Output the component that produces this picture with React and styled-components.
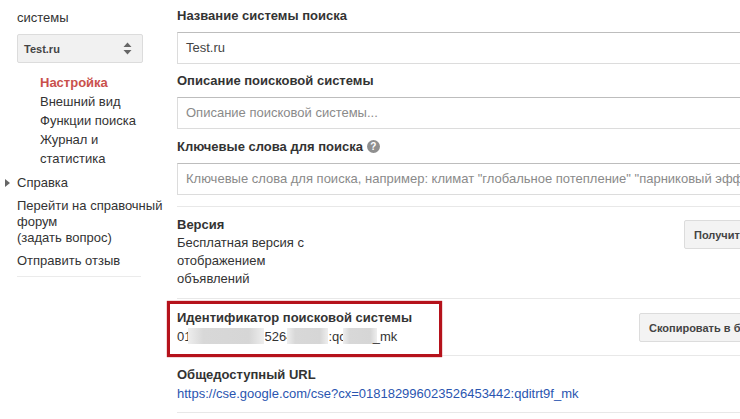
import React from 'react';
import styled, { createGlobalStyle } from 'styled-components';

const GlobalStyle = createGlobalStyle`
  html, body {
    margin: 0;
    padding: 0;
    background: #fff;
    overflow: hidden;
  }
  body {
    font-family: "Liberation Sans", Arial, sans-serif;
    font-size: 13px;
    color: #333;
  }
`;

const Page = styled.div`
  position: relative;
  display: flex;
  width: 740px;
  height: 419px;
  overflow: hidden;
`;

const Sidebar = styled.nav`
  flex: none;
  width: 177px;
  box-sizing: border-box;
  padding: 10px 10px 0 17px;
`;

const SideText = styled.div`
  line-height: 16px;
  margin-top: ${p => p.$top || 0}px;
`;

const Select = styled.div`
  display: flex;
  align-items: center;
  justify-content: space-between;
  width: 126px;
  height: 29px;
  box-sizing: border-box;
  margin-top: 8px;
  padding: 0 10px 0 6px;
  background: #f1f1f1;
  border: 1px solid #dcdcdc;
  border-radius: 2px;
  font-size: 11px;
  font-weight: bold;
  color: #444;
`;

const SubMenu = styled.ul`
  list-style: none;
  width: 105px;
  margin: 10px 0 0;
  padding: 0 0 0 23px;
`;

const SubItem = styled.li`
  line-height: 19px;
  color: ${p => (p.$active ? '#c9504b' : '#333')};
  font-weight: ${p => (p.$active ? 'bold' : 'normal')};
`;

const HelpItem = styled(SideText)`
  position: relative;
`;

const Arrow = styled.i`
  position: absolute;
  left: -12px;
  top: 4px;
  border-left: 5px solid #666;
  border-top: 4px solid transparent;
  border-bottom: 4px solid transparent;
`;

const SideDivider = styled.div`
  width: 124px;
  height: 1px;
  margin-top: 7px;
  background: #ebebeb;
`;

const Main = styled.main`
  flex: none;
  width: 563px;
  padding-top: 8px;
`;

const Label = styled.div`
  font-weight: bold;
  line-height: 15px;
  color: #333;
  display: flex;
  align-items: center;
  gap: 4px;
  margin-top: ${p => p.$top || 0}px;
`;

const Field = styled.div`
  height: 32px;
  width: 600px;
  box-sizing: border-box;
  margin-top: 9px;
  padding-left: 8px;
  border: 1px solid #dcdcdc;
  border-top-color: #bdbdbd;
  font-size: 13px;
  line-height: 30px;
  white-space: nowrap;
  color: ${p => (p.$placeholder ? '#8a8a8a' : '#444')};
`;

const HelpIcon = styled.span`
  display: inline-flex;
  align-items: center;
  justify-content: center;
  width: 13px;
  height: 13px;
  border-radius: 50%;
  background: #8f8f8f;
  color: #fff;
  font-size: 10px;
  font-weight: bold;
`;

const Row = styled.section`
  display: flex;
  align-items: flex-start;
  box-sizing: border-box;
  height: ${p => p.$height}px;
  margin-top: ${p => p.$top || 0}px;
  padding-top: 9px;
  border-top: 1px solid #e8e8e8;
`;

const RowText = styled.div`
  flex: none;
  width: ${p => p.$width}px;
  line-height: ${p => p.$line}px;
`;

const Narrow = styled.div`
  width: 140px;
`;

const RowLabel = styled.div`
  font-weight: bold;
`;

const Button = styled.button`
  flex: none;
  height: 29px;
  width: 200px;
  margin-top: ${p => p.$top || 0}px;
  padding: 0 9px;
  text-align: left;
  white-space: nowrap;
  background: #f3f3f3;
  border: 1px solid #dcdcdc;
  border-radius: 2px;
  font-family: inherit;
  font-size: 11px;
  font-weight: bold;
  color: #444;
`;

const Mask = styled.span`
  display: inline-block;
  width: ${p => p.$width}px;
  height: 16px;
  margin: 0 ${p => p.$after || 0}px 0 ${p => p.$before || -3}px;
  vertical-align: -3px;
  background: linear-gradient(90deg, #eee, #d8d8d8 20%, #d6d6d6 80%, #eee);
`;

const UrlLink = styled.a`
  color: #2a55b0;
  text-decoration: none;
`;

const Highlight = styled.div`
  position: absolute;
  left: 167px;
  top: 301px;
  width: 275px;
  height: 56px;
  box-sizing: border-box;
  border: 3px solid #b5121b;
  box-shadow: 0 0 1px #b5121b;
  pointer-events: none;
`;

export default function App() {
  return (
    <>
      <GlobalStyle />
      <Page>
        <Sidebar>
          <SideText>системы</SideText>
          <Select>
            Test.ru
            <svg width="9" height="13" viewBox="0 0 9 13">
              <path d="M4.5 0.5 L8.5 5 H0.5 Z M4.5 12.5 L8.5 8 H0.5 Z" fill="#666" />
            </svg>
          </Select>
          <SubMenu>
            <SubItem $active>Настройка</SubItem>
            <SubItem>Внешний вид</SubItem>
            <SubItem>Функции поиска</SubItem>
            <SubItem>Журнал и статистика</SubItem>
          </SubMenu>
          <HelpItem $top={7}><Arrow />Справка</HelpItem>
          <SideText $top={7}>Перейти на справочный форум<br />(задать вопрос)</SideText>
          <SideText $top={7}>Отправить отзыв</SideText>
          <SideDivider />
        </Sidebar>
        <Main>
          <Label>Название системы поиска</Label>
          <Field>Test.ru</Field>
          <Label $top={9}>Описание поисковой системы</Label>
          <Field $placeholder>Описание поисковой системы...</Field>
          <Label $top={10}>
            Ключевые слова для поиска <HelpIcon>?</HelpIcon>
          </Label>
          <Field $placeholder>
            Ключевые слова для поиска, например: климат "глобальное потепление" "парниковый эффект"
          </Field>
          <Row $height={92} $top={11}>
            <RowText $width={507} $line={18}>
              <RowLabel>Версия</RowLabel>
              <Narrow>Бесплатная версия с отображением объявлений</Narrow>
            </RowText>
            <Button $top={4}>Получить ключ</Button>
          </Row>
          <Row $height={57}>
            <RowText $width={462} $line={19}>
              <RowLabel>Идентификатор поисковой системы</RowLabel>
              <div>01<Mask $width={76} />5264<Mask $width={41} $before={-6} />:qc<Mask $width={34} $after={-4} />_mk</div>
            </RowText>
            <Button $top={5}>Скопировать в буфер</Button>
          </Row>
          <Row $height={57}>
            <RowText $width={500} $line={19}>
              <RowLabel>Общедоступный URL</RowLabel>
              <UrlLink href="#">https://cse.google.com/cse?cx=018182996023526453442:qditrt9f_mk</UrlLink>
            </RowText>
          </Row>
          <Row $height={7} />
        </Main>
        <Highlight />
      </Page>
    </>
  );
}
